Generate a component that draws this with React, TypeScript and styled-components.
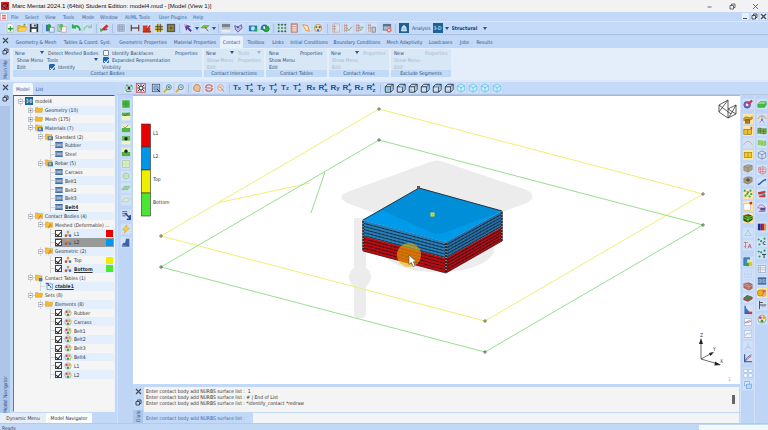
import React from "react";
import styled, { createGlobalStyle, css } from "styled-components";

const uiFont = `"DejaVu Sans Condensed", "Liberation Sans", Arial, sans-serif`;

const Global = createGlobalStyle`
  * { box-sizing: border-box; }
  body { margin: 0; background: #c2d8f7; }
  body, button, input, select, textarea {
    font-family: ${uiFont};
    font-size: 5px;
    line-height: 6px;
    color: #2b3f63;
  }
  button { border: 0; padding: 0; background: none; white-space: nowrap; }
`;

/* ---------- icons ---------- */

const P = (d: string, stroke = "#333", w = 1, fill = "none") => (
  <path d={d} stroke={stroke} strokeWidth={w} fill={fill} />
);
const R = (x: number, y: number, w: number, h: number, fill: string, stroke?: string) => (
  <rect x={x} y={y} width={w} height={h} fill={fill} stroke={stroke} strokeWidth={0.8} />
);
const C = (cx: number, cy: number, r: number, fill: string, stroke?: string) => (
  <circle cx={cx} cy={cy} r={r} fill={fill} stroke={stroke} strokeWidth={0.9} />
);
const cube = (stroke: string, fill: string, face: string) => (
  <>
    {P("M1.500 4.500h6.500v6.500h-6.500z", stroke, 1.1, fill)}
    {P("M1.500 4.500l3-3h6.500v6.500l-3 3M8 4.500l3-3", stroke, 1.1)}
    {P(face, "none", 0, "#7cc9f0")}
  </>
);
const hexCube = (stroke: string, fill: string) => (
  <>
    {P("M6 1l4.500 2.300v5.400l-4.500 2.300-4.500-2.300v-5.400z", stroke, 0.9, fill)}
    {P("M1.500 3.300l4.500 2.400 4.500-2.400M6 5.700v5.300", stroke, 0.9)}
  </>
);
const meshLines = (
  <>
    {R(2, 1, 8, 10, "none", "#c4a59d")}
    {P("M4 2v9M2 4h4M2 7h4", "#b98d86", 0.9)}
  </>
);

const icons: Record<string, React.ReactNode> = {
  list: <>{R(1, 1, 10, 10, "#fff", "#d99")}{P("M3 3.500h6M3 6h6M3 8.500h6", "#d22f3c", 1.3)}</>,
  file: <>{P("M2.500 1h5.500l2 2v8h-7.500z", "#9ab29c", 0.8, "#fff")}{P("M6.500 4v6M3.500 7h6", "#27a030", 1.8)}</>,
  open: <>{P("M1 10v-7h3l1 1h5v2", "#d79a14", 1, "#f6c53e")}{P("M1 10l2-5h9l-2 5z", "#d79a14", 0.6, "#fbd45a")}{P("M8 3l2-2", "#49a543", 1.5)}</>,
  save: <>{R(1, 1, 10, 10, "#30343c")}{R(3, 1, 6, 4, "#d9dde5")}{R(3, 7, 6, 4, "#fff")}{R(6, 2, 2, 2, "#30343c")}</>,
  import: <>{R(1, 2, 6, 8, "#3972b0")}{R(5, 5, 6, 6, "#dfe9f6", "#5e86b4")}{P("M5 9v-6M3 5l2-3 2 3", "#25a52a", 1.6)}</>,
  export: <>{R(1, 2, 6, 8, "#b9d3c0", "#7ba98a")}{R(5, 4, 6, 7, "#f3f3ef", "#b5a391")}{P("M5 9v-6M3 5l2-3 2 3", "#57b55a", 1.4)}</>,
  undo: <>{P("M2 5.500c3-3 8-3 9 3.500M2 1.500v4h4", "#25b144", 2)}</>,
  redo: <>{P("M10 5.500c-3-3-8-3-9 3.500M10 1.500v4h-4", "#8ccba4", 1.6)}</>,
  pen: <>{P("M2 9c3-5 5 2 8-2", "#2f72c5", 1.4)}{P("M4 7l5-5 2 2-5 5z", "#b81c1c", 0.6, "#e32d22")}{P("M1 6l4 3-3 2z", "none", 0, "#4ca94b")}</>,
  grid: <>{P("M2 2h8v8h-8zM4 2v8M6 2v8M8 2v8M2 4h8M2 6h8M2 8h8", "#7d8da8", 0.7)}</>,
  dim: <>{P("M1.500 2v8M10.500 2v8", "#8a3326", 1.4)}{P("M1.500 6h9", "#222", 1.2)}</>,
  angle: <>{P("M1 11v-8h6l-1 3h4v5z", "none", 0, "#d8381f")}{P("M1 10.500h10M5 9l5-6", "#a83219", 1.6)}</>,
  snap: <>{R(2, 2, 8, 8, "#f0c818")}{P("M4.500 1v10M7.500 1v10M1 4.500h10M1 7.500h10", "#333", 1)}</>,
  snap2: <>{R(1, 1, 10, 10, "#4e5968")}{R(3, 3, 6, 6, "#f1ca20")}{P("M5 3v6M7 3v6M3 5h6M3 7h6", "#333", 0.8)}</>,
  pick: <>{P("M2 2l7 2-2.500 1 4 4-1.500 1.500-4-4-1 2.500z", "#3f2a86", 0.5, "#583fb2")}{R(1, 1, 3, 3, "#d9a6d8")}</>,
  plane: <>{P("M1 6l3-3h7l-3 3z", "#3f9c26", 0.6, "#6cc940")}{P("M6 5l4 5", "#b33", 1.1)}</>,
  shade: <>{R(1, 1, 10, 4, "#7c8087")}{R(1, 5, 10, 3, "#b6babf")}{R(1, 8, 10, 3, "#e9ebee")}</>,
  poly: <>{P("M2 3l4 2 4-3 1 4-5 5-3-3z", "#5d55a6", 1, "#b7b4e0")}{C(6, 5, 1, "#4740a0")}</>,
  cam: <>{R(1, 3, 10, 7, "#1f7cc4")}{C(6, 6.5, 2.5, "#bfe5ef")}{R(8, 6, 3, 4, "#28a745")}</>,
  globe: <>{P("M1 8c-1-6 6-8 8-4l-4 5z", "none", 0, "#1878b8")}{C(7.5, 7, 3.5, "#2bab3e", "#147a35")}{R(4, 4, 2, 3, "#fff")}</>,
  dots: <>{[1, 5, 9].map((x) => [1, 5, 9].map((y) => <rect key={`${x}${y}`} x={x} y={y} width="2" height="2" fill={y === 5 ? "#1d8a2e" : "#333"} />))}{P("M2 2h8v8h-8z", "#5cb567", 0.6)}</>,
  calc: <>{R(2.5, 1, 7.5, 10, "#d9a292", "#b2645a")}{P("M4 3h5M4 5.500h5M4 7.500h5M4 9.500h5", "#fff", 0.8)}</>,
  note: <>{P("M2 2l6 1 2 7-4-1z", "#dc8a36", 1, "#fde7c2")}</>,
  palette: <>{C(6, 6, 4.5, "#f1d9b9", "#b7885a")}{C(4, 5, 1.3, "#3aa34a")}{C(8, 5, 1.3, "#c33")}{C(6, 8.5, 1.3, "#36c")}</>,
  tab1: <>{meshLines}{R(6, 4, 4, 4, "#e9e2e0")}</>,
  tab2: <>{P("M2 1v10M4 1v10M1 3h5M1 6h5M1 9h5", "#c08f88", 0.8)}{P("M5 6l2 3 4-5", "#7fae7a", 1.2)}</>,
  tab3: <>{P("M2 1v10M4 1v10M1 3h5M1 6h5M1 9h5", "#c08f88", 0.8)}{P("M5 5h5l-3 4z", "#8aa683", 1)}</>,
  tab4: <>{P("M2 1v10M4 1v10M1 3h4M1 6h4", "#c08f88", 0.8)}{R(6, 5, 4, 6, "#c7c9cc", "#777")}</>,
  close: <>{R(1, 1, 10, 8, "#5d7191")}{R(2, 4, 8, 4, "#a9bad0")}{C(8.5, 8.5, 3, "#e76b5d")}{P("M7 7l3 3M10 7l-3 3", "#fff", 0.9)}</>,
  app: <>{R(0, 0, 12, 12, "#1f5f92")}{P("M3 9.500l1-5h4l1 5z", "#fff", 0.9, "#9fc6e3")}{P("M6 5v-2.500", "#fff", 1.3)}</>,
  eye: <>{P("M2 3l3-1M8 2l2 2M9 10l-5 .5-2-2", "#37a34c", 1.3)}{P("M1 6c3-3 7-3 10 0-3 3-7 3-10 0z", "#487", 0.7, "#eef8ee")}{C(6, 6, 1.8, "#333")}</>,
  fit: <>{R(0.5, 0.5, 11, 11, "#e7d4dc", "#c03945")}{P("M2 2l8 8M10 2l-8 8M6 1.500v9M1.500 6h9", "#222", 1)}{R(4, 4, 4, 4, "#fff", "#333")}</>,
  zoombox: <>{R(1.5, 1.5, 9, 9, "#dfe8f6", "#334")}{P("M3.500 3.500h5v5h-5z", "#3978b8", 0.8, "#8db5df")}{P("M7 7l4 4", "#333", 1.2)}</>,
  zoomin: <>{P("M1 11l4-4", "#e0a626", 2)}{C(7, 5, 3, "#d9efff", "#467")}{P("M5.500 5h3M7 3.500v3", "#174", 0.9)}</>,
  zoomout: <>{P("M1 11l4-4", "#e0a626", 2)}{C(7, 5, 3, "#d9efff", "#467")}{P("M5.500 5h3", "#174", 0.9)}</>,
  hand: <>{P("M2 5l2-3 2 0 2 0 2 3-1 5h-4l-3-2z", "#bd7348", 0.9, "#f0bd90")}</>,
  rotate: <>{P("M2 6c0-5 7-5 8-1M10 6c0 5-7 5-8 1M3 6h6", "#d2644e", 1.4)}</>,
  rotz: <>{C(5.5, 5.5, 3.5, "#f0e2d6", "#d09a82")}{P("M6 6l4 5M3 5h4", "#b88", 1)}</>,
  c1: cube("#28333f", "#bfe2f5", "M3 6h4v4h-4z"),
  c2: cube("#28333f", "none", "M5 3h4v2h-4z"),
  c3: cube("#28333f", "none", "M3 7h2v3h-2z"),
  c4: cube("#28333f", "none", "M8.500 5l2-2v5l-2 2z"),
  c5: cube("#28333f", "none", "M3 4.500l1.500-2h5l-1.500 2z"),
  c6: cube("#28333f", "none", "M3 9h4v1h-4z"),
  iso: hexCube("#5fc0e8", "#c7ecfb"),
  gsel: <>{R(1.5, 1.5, 9, 9, "#40b63c", "#8bb98b")}{P("M1.500 6h9M6 1.500v9", "#2d9a32", 0.8)}</>,
  gtop: <>{R(1, 5, 10, 6, "#f1f3c5")}{R(1, 2, 10, 4, "#58b741")}{P("M3 4l2 2 4-4", "#2b7b2a", 1.1)}</>,
  gbot: <>{R(1, 2, 10, 4, "#eef3c5")}{R(1, 6, 10, 5, "#4fb742")}{P("M3 4l2 2 4-4", "#a78a45", 1.1)}</>,
  geyeb: <>{R(1, 1, 10, 6, "#67bd58")}{R(1, 7, 10, 4, "#f1f3c5")}{C(6, 4.5, 2, "#223")}</>,
  geyet: <>{R(1, 1, 10, 5, "#e4efc0")}{R(1, 6, 10, 5, "#4db440")}{C(6, 5, 2, "#223")}</>,
  gpale: <>{R(2, 2, 8, 8, "#dfefc0", "#a8c59a")}{P("M2 6h8M6 2v8", "#bdd4a0", 0.6)}</>,
  ground: <>{C(6, 6, 3.5, "#e3f4d5", "#83c28f")}{R(4, 4, 4, 4, "#b9dfae")}</>,
  gflat: <>{P("M1 8l3-4h7l-3 4z", "#7fb48a", 0.6, "#9dd18e")}</>,
  gflat2: <>{P("M1 8l3-4h7l-3 4z", "#a9c3a5", 0.6, "#dcedc9")}</>,
  selarrow: <>{P("M1.500 2h6M1.500 4.500h6M1.500 7h4", "#3e5c98", 1.1)}{P("M5 4l6 6M11 6v5h-4", "#26417f", 1.8)}</>,
  bolt: <>{P("M7 1l-5 6h3l-1 4 6-6h-3z", "#c99a1c", 0.6, "#ffd633")}</>,
  stairs: <>{P("M1 10l2-3h2l1-5h4v9z", "none", 0, "#3b62ac")}{P("M1 11h9", "#27427b", 1)}</>,
  matrl: <>{C(5, 7, 4, "#7a6dc0", "#4d4698")}{C(5, 7, 1.5, "#fff")}{P("M6 6l5-4", "#e12c3b", 2.6)}</>,
  block: <>{P("M1 6l3-3h7v4l-2 3h-8z", "#2d7c34", 0.6, "#41bb47")}{P("M1 6l3-3h7l-2 3z", "none", 0, "#86dc7c")}</>,
  pipe: <>{P("M1 5c3-4 7 2 10-2v3c-3 3-7 0-10 2z", "#7a5c14", 0.7, "#e1a72a")}{R(3, 7, 5, 4, "#b4801f", "#64501c")}</>,
  ybox: <>{R(1, 4, 9, 6, "#e9c233", "#947510")}{P("M5.500 4v6", "#947510", 0.7)}{R(9, 1, 2, 3, "#d63a8f")}</>,
  arc: <>{P("M1 8c2-5 8-5 10 0", "#c2ad7b", 1.1)}</>,
  ybox2: <>{R(1.5, 3, 9, 6, "#f4c927", "#a1810f")}{P("M6 3v6", "#a1810f", 0.7)}</>,
  solid: <>{P("M1 4l5-2 5 1v5l-5 3-5-2z", "#77705c", 0.6, "#b0a58a")}{P("M1 4l5 2 5-3M6 6v5", "#77705c", 0.6)}</>,
  solid2: <>{P("M1 4l5-2 5 1v5l-5 3-5-2z", "#6c6656", 0.6, "#a39a80")}{P("M3.500 6h5M6 4v4", "#333", 1.1)}</>,
  nodes: <>{[[2, 2], [6, 4], [9, 2], [3, 8], [8, 9], [10, 6], [5, 6]].map(([x, y]) => <circle key={`${x}-${y}`} cx={x} cy={y} r="1.300" fill="#2b9e4e" />)}{P("M2 2l4 2 3-2M3 8l2-2 3 3", "#6bc48a", 0.6)}</>,
  corner: <>{R(1, 3, 8, 8, "#fff", "#cdb58e")}{R(8, 1, 3, 3, "#d6262b")}</>,
  gcube: <>{P("M1 3l6-1 4 2v4l-5 3-5-2z", "#111", 0.8, "#1f7a26")}{P("M1 3l5 2 5-1M6 5v6M1 6l5 2 5-2", "#b8d12b", 0.8)}</>,
  tri: <>{P("M6 3l4 6h-8z", "#a9bdd8", 0.8)}{C(6, 3, 1, "#9fb4d2")}</>,
  ann: <>{P("M3 2v8M1 3h5M1 8h3", "#b57474", 0.9)}{P("M6 10l2-5 2 5M7 8h2", "#a05555", 0.9)}</>,
  paste: <>{R(1, 1, 7, 9, "#3f8ac0", "#2b5f8a")}{R(5, 3, 5, 6, "#dff0a8")}{R(7, 6, 4, 5, "#e9c21d")}{R(4, 7, 3, 4, "#3aa548")}</>,
  faint: <>{P("M6 2v8M2 6h8M2 2h8v8h-8z", "#bacde8", 0.7)}</>,
  brick: <>{P("M1 3l6-1 4 2v5l-4 2-6-3z", "#7c4a45", 0.6, "#b37068")}{P("M1 5l6 2 4-2M1 3l6 2v5", "#e0b3aa", 0.6)}</>,
  flat: <>{P("M1 6l4-3 6 2v2l-5 3-5-2z", "#7d2e2a", 0.8, "#c7483f")}{P("M1 6l4-3 6 2-5 3z", "none", 0, "#3a8d48")}</>,
  ltri: <>{P("M2.500 1v9h7", "#2857a5", 1.5)}{P("M3 3l6 7h-6z", "none", 0, "#3d69b3")}{R(7, 8, 4, 3, "#d03c3c")}</>,
  plot: <>{R(1.5, 2, 9, 8, "#f4f6fb", "#a6b5cf")}{P("M2 8l3-3 2 2 3-3", "#c55", 0.8)}{P("M2 6l3 1 2-3 3 2", "#57b", 0.7)}</>,
  plot2: <>{R(1.5, 2, 9, 8, "#eef2f9", "#a6b5cf")}{P("M3 8c2-6 5 1 6-4", "#8aa0c0", 0.9)}</>,
  axes: <>{P("M6 2v5l-4 3M6 7l4 2", "#a6c0de", 1)}</>,
  curve: <>{P("M2 1.500v9h9", "#234b93", 1.3)}{P("M2 10c3-1 4-5 8-6", "#c33", 1)}{P("M2 10c2-4 4-6 8-8", "#36a", 1)}</>,
  tiles: <>{R(1, 1.5, 4, 4, "#fff", "#93b5de")}{R(7, 1.5, 4, 4, "#fff", "#93b5de")}{R(1, 7, 4, 4, "#fff", "#93b5de")}{R(7, 7, 4, 4, "#fff", "#93b5de")}</>,
  casc: <>{R(2, 2, 6, 5, "#dcecff", "#6d9fd8")}{R(4, 5, 6, 5, "#b8d8f8", "#6d9fd8")}</>,
  wirearc: <>{P("M1 6c2-5 8-5 10 0", "#d79b3a", 1.2)}{P("M6 3v4l-3 4M6 7l3 4", "#8a7db0", 0.8)}{C(6, 7, 1, "#c33")}</>,
  gmesh: <>{P("M1 3c3-2 6 2 10 0v6c-4 2-7-2-10 0z", "#46702c", 0.7, "#79b84c")}{P("M4 2.500v6.500M8 3.500v6M1 6c3-2 6 2 10 0", "#3c6524", 0.7)}</>,
  gsurf: <>{P("M1 3c3-2 6 2 10 0v6c-4 2-7-2-10 0z", "none", 0, "#8ccb5e")}{P("M4 3v6M8 3v6", "#acdc88", 0.9)}</>,
  wire: hexCube("#7286a3", "none"),
  redmesh: <>{P("M2 3l6-1 3 2-1 6-5 1-3-3z", "#c47b82", 0.8, "#eddde4")}{P("M2 5l8 0M4 3v7M7 2v9M3 8h7", "#c0606c", 0.7)}</>,
  wave: <>{P("M1 9c4 0 4-5 10-6", "#2b5cae", 1.7)}</>,
  redband: <>{P("M1 4l9-2v3l-8 2zM2 8l8-1v3l-7 0z", "none", 0, "#cf3338")}{P("M2 5l8 2", "#3a7c4b", 1)}</>,
  spool: <>{P("M1 6c1-6 8-4 9 0l-5 0z", "#c25fa5", 1)}{R(4, 6, 6, 3, "#5d4a86")}{P("M2 10h8", "#b6407c", 1)}</>,
  contour: <>{R(1, 2, 3, 8, "#1c2c8e")}{R(4, 2, 2, 8, "#4a2f9d")}{R(6, 2, 3, 8, "#c5222b")}{R(9, 2, 2, 8, "#e8a01e")}</>,
  nodesC: <>{C(2, 3, 1.3, "#25a154")}{C(5, 5, 1.3, "#25a154")}{C(3, 9, 1.3, "#25a154")}{C(9, 2, 1.3, "#25a154")}{P("M10 6c-3-2-4 4 0 3", "#234", 1.1)}</>,
  nodesT: <>{C(2, 3, 1.3, "#25a154")}{C(5, 4, 1.3, "#25a154")}{C(3, 9, 1.3, "#25a154")}{C(9, 2, 1.3, "#25a154")}{P("M6 6.500h5M8.500 6v5", "#234", 1.1)}</>,
  table: <>{R(1.5, 2, 9, 8, "#f0f2f5", "#98a2b2")}{P("M1.500 4.500h9M1.500 7h9M4 2v8", "#98a2b2", 0.7)}</>,
  rebar: <>{R(1, 2, 10, 8, "#5f8fc9")}{P("M3 4l6 4M9 4l-6 4", "#e8c2b0", 1)}{P("M1 2.500h10M1 9.500h10M5 6h2", "#345b91", 1.3)}</>,
  ball: <>{P("M6 1l5 1v8l-5 1z", "none", 0, "#efa39c")}{C(4, 6, 3.7, "#e8b51c", "#b07d10")}{R(7, 3, 3, 2, "#d6484d")}</>,
  tsec: <>{P("M3 1v10M3 6h8M3 3h4", "#444", 1.1)}{P("M5 8h5", "#999", 0.8)}</>,
  folder: <>{P("M0.500 2.500h4l1 1h6l-1 6h-10z", "#c78d18", 0.6, "#f5b92c")}</>,
  folder2: <>{P("M0.500 1.500h4l1 1h5v7h-10z", "#c78d18", 0.6, "#f6c136")}{R(4, 5, 8, 6, "#4a78b8")}{R(6, 6, 3, 3, "#e7b64a")}</>,
  folder3: <>{P("M0.500 1.500h4l1 1h6v7h-11z", "#c78d18", 0.6, "#f6be35")}{P("M5 11l3-6 2 3", "#c05a2c", 1)}</>,
  folder4: <>{P("M0.500 1.500h4l1 1h5v7h-10z", "#c78d18", 0.6, "#f6be35")}{R(6, 6, 5, 5, "#3f78b0")}</>,
  mat: <>{R(0.5, 1.5, 11, 9, "#6d99cf")}{P("M0.500 2.500h11M0.500 9.500h11", "#315d97", 1.6)}{P("M3 4.500l6 3M9 4.500l-6 3", "#e3b7a6", 1.2)}</>,
  body: <>{C(6, 3, 2, "#dd9a35")}{C(3, 8.5, 2, "#d14b38")}{C(9, 8.5, 2, "#3e78c4")}{P("M6 5v3", "#687", 1)}</>,
  set: <>{C(6, 6, 4.8, "#f0efdc", "#9d9674")}{C(4, 4.5, 1.7, "#b94ba8")}{C(8, 4.5, 1.7, "#e1a42c")}{C(6, 8.5, 1.8, "#2f9c4d")}</>,
  ctab: <>{R(3, 3, 8, 8, "#e3eefb", "#456fa3")}{P("M1 2h4v4M5 5c3 0 4 2 4 4", "#27568f", 1.4)}</>,
  model: <>{R(0, 0, 12, 12, "#1d6597")}{P("M2 3.500h2.500v5h-2.500M2.500 6h2M6 6h1M8 3.500v5h1c2 0 2-5 0-5z", "#fff", 1)}</>,
  logo: <>{R(0, 0, 12, 12, "#d3202b")}{P("M2 7c0-6 8-6 8-2s-5 1-5 3 4 1 4 1", "#501018", 1.8)}{P("M3 4l5 5", "#f7a0a0", 1)}</>,
};

const Svg = styled.svg<{ $s: number }>`
  display: block;
  flex: none;
  width: ${(p) => p.$s}px;
  height: ${(p) => p.$s}px;
`;
const Icon = ({ name, size = 10 }: { name: string; size?: number }) => (
  <Svg $s={size} viewBox="0 0 12 12" aria-hidden>{icons[name]}</Svg>
);

/* ---------- window chrome ---------- */

const Page = styled.div`
  display: flex;
  flex-direction: column;
  min-height: 100vh;
  background: #c2d8f7;
`;
const TitleBar = styled.header`
  display: flex;
  align-items: center;
  gap: 3px;
  height: 12px;
  padding: 0 9px 0 1px;
  background: #f2f2f2;
`;
const Title = styled.h1`
  flex: 1;
  margin: 0;
  font: 400 6px/8px "Liberation Sans", Arial, sans-serif;
  color: #111;
  white-space: nowrap;
`;
const WinButtons = styled.div<{ $gap: number }>`
  display: flex;
  align-items: center;
  gap: ${(p) => p.$gap}px;
`;
const WinButton = styled.button<{ $pale?: boolean }>`
  display: grid;
  place-items: center;
  width: 7px;
  height: 7px;
  background: ${(p) => (p.$pale ? "#e9f0fa" : "none")};
`;
const winPaths = {
  min: "M1.500 4h4",
  minLow: "M1 5.500h4",
  max: "M1 2.500h3.500v3.500h-3.500zM2.500 2.500v-1.500h3.500v3.500h-1.500",
  x: "M1 1l5 5M6 1l-5 5",
};
const WinGlyph = ({ kind, w = 1 }: { kind: keyof typeof winPaths; w?: number }) => (
  <Svg $s={7} viewBox="0 0 7 7" aria-hidden>{P(winPaths[kind], "#444b58", w)}</Svg>
);

const MenuBar = styled.nav`
  display: flex;
  align-items: center;
  height: 10px;
  padding-right: 1px;
  border-bottom: 1px solid #d9e6fa;
`;
const MenuItem = styled.button<{ $w: number }>`
  width: ${(p) => p.$w}px;
  text-align: left;
  color: #3c5d92;
`;
const Grow = styled.div`
  flex: 1;
`;

const ToolBar = styled.div<{ $start: number; $line?: boolean }>`
  display: flex;
  align-items: center;
  height: 13px;
  padding-left: ${(p) => p.$start}px;
  border-bottom: 1px solid ${(p) => (p.$line ? "#abc1df" : "#b4c8e6")};
  background: #c5daf8;
`;
const ToolColumn = styled.div<{ $w: number }>`
  display: flex;
  flex-direction: column;
  align-items: center;
  width: ${(p) => p.$w}px;
  padding-top: 3px;
  border-left: 1px solid #d4e3f9;
  background: #bfd5f6;
`;
const ToolButton = styled.button<{ $on?: boolean }>`
  display: grid;
  place-items: center;
  flex: none;
  width: 12px;
  height: 12px;
  border: 1px solid #c4d9f7;
  background: ${(p) => (p.$on ? "#ffe7a3" : "#d0e1f8")};
`;
const DropButton = styled.button`
  display: grid;
  place-items: center;
  flex: none;
  width: 5px;
  height: 10px;
`;
const Arrow = styled.span<{ $dim?: boolean }>`
  display: inline-block;
  flex: none;
  border: 2px solid transparent;
  border-bottom: 0;
  border-top: 3px solid ${(p) => (p.$dim ? "#a4b3c8" : "#2c4f8c")};
`;
const Sep = styled.span<{ $w: number }>`
  display: grid;
  place-items: center;
  flex: none;
  width: ${(p) => p.$w}px;
  height: 10px;
  &::after {
    content: "";
    width: 1px;
    height: 9px;
    background: ${(p) => (p.$w > 3 ? "#a9c1e3" : "transparent")};
  }
`;
const Gap = styled.span<{ $h: number }>`
  flex: none;
  height: ${(p) => p.$h}px;
`;
const ToolText = styled.span`
  font-size: 5px;
  color: #33517f;
`;
const TypeSelect = styled.select`
  appearance: none;
  width: 31px;
  margin-left: 2px;
  padding: 0;
  border: 0;
  background: none;
  font-weight: 700;
  color: #12366f;
`;
const Badge = styled.button`
  width: 10px;
  height: 10px;
  margin-left: 2px;
  background: #1b6398;
  color: #fff;
`;

const renderTools = (spec: string) =>
  spec.split(" ").map((t, i) => {
    if (t[0] === "_") return <Sep key={i} $w={Number(t.slice(1))} />;
    if (t === "v") return <DropButton key={i} aria-label="More options"><Arrow /></DropButton>;
    return <ToolButton key={i} aria-label={t}><Icon name={t} /></ToolButton>;
  });
const renderColumn = (spec: string) =>
  spec.split(" ").map((t, i) => {
    if (t[0] === "_") return <Gap key={i} $h={Number(t.slice(1))} />;
    const on = t.endsWith("*");
    const name = t.replace("*", "");
    return <ToolButton key={i} $on={on} aria-label={name}><Icon name={name} /></ToolButton>;
  });

/* ---------- ribbon ---------- */

const RibbonDock = styled.section`
  display: flex;
  height: 47px;
  border-bottom: 2px solid #dce8fa;
`;
const Rail = styled.div`
  display: flex;
  flex-direction: column;
  align-items: center;
  gap: 4px;
  flex: none;
  width: 10px;
  padding-top: 2px;
`;
const RailTab = styled.button<{ $end?: boolean }>`
  flex: 1;
  width: 10px;
  min-height: 0;
  writing-mode: vertical-rl;
  transform: rotate(180deg);
  text-align: ${(p) => (p.$end ? "left" : "center")};
  background: #adc5e8;
  color: #2f568f;
`;
const RibbonMain = styled.div`
  flex: 1;
  min-width: 0;
  display: flex;
  flex-direction: column;
  padding-left: 3px;
`;
const TabRow = styled.div`
  display: flex;
  align-items: flex-end;
  height: 13px;
`;
const Tab = styled.button<{ $w: number; $on?: boolean }>`
  width: ${(p) => p.$w}px;
  height: 12px;
  color: #33558c;
  ${(p) => p.$on && css`background: #e7f0fd; border-radius: 2px 2px 0 0;`}
`;
const RibbonBody = styled.div`
  flex: 1;
  display: flex;
  align-items: flex-start;
  gap: 2px;
  padding-top: 1px;
  margin-left: -3px;
  padding-left: 3px;
  background: #e4eefb;
`;
const Group = styled.section<{ $w: number }>`
  width: ${(p) => p.$w}px;
  background: #d7e7f5;
`;
const GroupGrid = styled.div<{ $cols: string }>`
  display: grid;
  grid-template-columns: ${(p) => p.$cols};
  grid-template-rows: repeat(3, 1fr);
  align-items: center;
  height: 21px;
  padding: 0 2px;
`;
const GroupTitle = styled.h2`
  margin: 0;
  font: 400 5px/7px ${uiFont};
  text-align: center;
  color: #2d5080;
  background: #c3daf7;
`;
const Cell = styled.div<{ $in?: number }>`
  display: flex;
  align-items: center;
  justify-content: space-between;
  padding-left: ${(p) => p.$in ?? 0}px;
  padding-right: 3px;
  white-space: nowrap;
`;
const Cmd = styled.button<{ $dim?: boolean }>`
  color: ${(p) => (p.$dim ? "#a9b8ca" : "#2d4d7c")};
`;
const Check = styled.label`
  display: flex;
  align-items: center;
  gap: 3px;
  white-space: nowrap;
  color: #2d4d7c;
`;
const Box = styled.input<{ $plain?: boolean }>`
  appearance: none;
  display: grid;
  place-items: center;
  flex: none;
  width: ${(p) => (p.$plain ? 7 : 6)}px;
  height: ${(p) => (p.$plain ? 7 : 6)}px;
  margin: 0;
  border: 1px solid ${(p) => (p.$plain ? "#444" : "#7b8798")};
  border-radius: ${(p) => (p.$plain ? 0 : 1)}px;
  background: #fff;
  &:checked { ${(p) => !p.$plain && "background: #1c64b4; border-color: #1c64b4;"} }
  &:checked::after {
    content: "";
    width: 2px;
    height: 4px;
    border: solid ${(p) => (p.$plain ? "#222" : "#fff")};
    border-width: 0 1px 1px 0;
    transform: rotate(40deg);
  }
`;

const SmallGroup = ({ title, w, dim, arrow, second, indent }: {
  title: string; w: number; dim?: boolean; arrow?: boolean; second: "tools" | "props" | "propsDim"; indent: number;
}) => (
  <Group $w={w}>
    <GroupGrid $cols="31px 1fr">
      <Cell $in={indent ? 1 : 0}><Cmd>New</Cmd>{arrow && <Arrow />}</Cell>
      <Cell $in={1}>
        {second === "tools" ? <><Cmd $dim>Tools</Cmd><Arrow $dim /></> : <Cmd $dim={second === "propsDim"}>Properties</Cmd>}
      </Cell>
      <Cell $in={1}><Cmd $dim={dim}>Show Menu</Cmd></Cell>
      <Cell $in={1}>{second === "tools" && <Cmd $dim>Properties</Cmd>}</Cell>
      <Cell $in={1}><Cmd $dim={dim}>Edit</Cmd></Cell>
    </GroupGrid>
    <GroupTitle>{title}</GroupTitle>
  </Group>
);

/* ---------- navigator ---------- */

const Main = styled.main`
  flex: 1;
  display: flex;
  min-height: 0;
`;
const Navigator = styled.aside`
  display: flex;
  flex-direction: column;
  flex: none;
  width: 117px;
`;
const NavTop = styled.div`
  flex: 1;
  display: flex;
  min-height: 0;
`;
const NavPanel = styled.div`
  flex: 1;
  display: flex;
  flex-direction: column;
  padding: 0 2px 1px 3px;
`;
const NavTab = styled.button<{ $on?: boolean }>`
  height: 12px;
  padding: 0 3px;
  border-radius: 2px 2px 0 0;
  background: ${(p) => (p.$on ? "#f3f7fd" : "none")};
  color: #2c5795;
`;
const TreeBox = styled.div`
  flex: 1;
  padding-top: 1px;
  border: 1px solid #eef3fa;
  border-top-color: #4c5560;
  border-left-color: #6d7783;
  background: #f5f5f5;
`;
const Tree = styled.ul`
  display: grid;
  grid-auto-rows: 1fr;
  height: 282px;
  margin: 0;
  padding: 0;
  list-style: none;
`;
const TreeRow = styled.li<{ $level: number }>`
  display: flex;
  align-items: stretch;
  min-height: 0;
  padding-left: ${(p) => p.$level * 10 + 1}px;
`;
const Branch = styled.span`
  display: grid;
  place-items: center;
  flex: none;
  width: 10px;
`;
const TreeItem = styled.div<{ $alt: boolean; $sel?: boolean }>`
  flex: 1;
  display: flex;
  align-items: center;
  gap: 2px;
  min-width: 0;
  white-space: nowrap;
  color: #333;
  background: ${(p) => (p.$sel ? "#999" : p.$alt ? "#e3effc" : "transparent")};
`;
const TreeLabel = styled.label<{ $bold?: boolean }>`
  flex: 1;
  ${(p) => p.$bold && css`font-weight: 700; text-decoration: underline;`}
`;
const Swatch = styled.span<{ $c: string }>`
  flex: none;
  width: 7px;
  height: 7px;
  margin-right: 1px;
  background: ${(p) => p.$c};
`;
const BottomTabs = styled.div`
  display: flex;
  height: 10px;
`;
const BottomTab = styled.button<{ $on?: boolean }>`
  width: 46px;
  background: ${(p) => (p.$on ? "#fbfcfe" : "#e6eefa")};
  color: #333;
`;

type Node = { l: number; t: string; i: string; open?: boolean; check?: boolean; bold?: boolean; sel?: boolean; c?: string };
const nodes: Node[] = [
  { l: 0, t: "model4", i: "model", open: true },
  { l: 1, t: "Geometry (10)", i: "folder", open: false },
  { l: 1, t: "Mesh (175)", i: "folder", open: false },
  { l: 1, t: "Materials (7)", i: "folder2", open: true },
  { l: 2, t: "Standard (2)", i: "folder2", open: true },
  { l: 3, t: "Rubber", i: "mat" },
  { l: 3, t: "Steel", i: "mat" },
  { l: 2, t: "Rebar (5)", i: "folder2", open: true },
  { l: 3, t: "Carcass", i: "mat" },
  { l: 3, t: "Belt1", i: "mat" },
  { l: 3, t: "Belt2", i: "mat" },
  { l: 3, t: "Belt3", i: "mat" },
  { l: 3, t: "Belt4", i: "mat", bold: true },
  { l: 1, t: "Contact Bodies (4)", i: "folder3", open: true },
  { l: 2, t: "Meshed (Deformable) ...", i: "folder3", open: true },
  { l: 3, t: "L1", i: "body", check: true, c: "#e80000" },
  { l: 3, t: "L2", i: "body", check: true, c: "#0098ea", sel: true },
  { l: 2, t: "Geometric (2)", i: "folder3", open: true },
  { l: 3, t: "Top", i: "body", check: true, c: "#eeee00" },
  { l: 3, t: "Bottom", i: "body", check: true, c: "#48e834", bold: true },
  { l: 1, t: "Contact Tables (1)", i: "folder4", open: true },
  { l: 2, t: "ctable1", i: "ctab", bold: true },
  { l: 1, t: "Sets (8)", i: "folder", open: true },
  { l: 2, t: "Elements (8)", i: "folder", open: true },
  ...["Rubber", "Carcass", "Belt1", "Belt2", "Belt3", "Belt4", "L1", "L2"].map((t) => ({ l: 3, t, i: "set", check: true })),
];

const BranchMark = ({ open }: { open?: boolean }) => (
  <Svg $s={9} viewBox="0 0 9 9" aria-hidden>
    {open === undefined ? P("M4.500 0v9M4.500 4.500h4.500", "#c3c8d0", 0.7) : (
      <>
        {P("M6.500 4.500h2.500M4.500 0v2M4.500 7v2", "#c3c8d0", 0.7)}
        {R(2.5, 2.5, 4, 4, "#f8f8f8", "#b4b9c1")}
        {P(open ? "M3.500 4.500h2" : "M3.500 4.500h2M4.500 3.500v2", "#666", 0.8)}
      </>
    )}
  </Svg>
);

/* ---------- view area ---------- */

const Work = styled.div`
  flex: 1;
  display: flex;
  flex-direction: column;
  min-width: 0;
`;
const AxisButton = styled.button`
  display: flex;
  align-items: center;
  justify-content: center;
  flex: none;
  width: 12px;
  height: 12px;
  font: 700 8px/10px "Liberation Sans", Arial, sans-serif;
  color: #235091;
`;
const AxisName = styled.span`
  align-self: flex-end;
  font: 700 6px/8px "Liberation Sans", Arial, sans-serif;
`;
const AxisSuffix = styled.span`
  display: flex;
  flex-direction: column;
  align-items: center;
`;
const WorkRow = styled.div`
  flex: 1;
  display: flex;
  min-height: 0;
`;
const Center = styled.div`
  flex: 1;
  display: flex;
  flex-direction: column;
  min-width: 0;
`;
const Viewport = styled.div`
  flex: 1;
  display: flex;
  min-height: 0;
  border-top: 1px solid #a9b8cc;
  background: #fff;
`;
const Scene = styled.svg`
  display: block;
  width: 100%;
  font-family: ${uiFont};
  font-size: 5px;
`;
const Dialog = styled.section`
  display: flex;
  height: 39px;
  padding-top: 2px;
`;
const DialogMain = styled.div`
  flex: 1;
  display: flex;
  flex-direction: column;
  gap: 1px;
  padding: 1px 1px 0 1px;
`;
const Log = styled.div`
  flex: 1;
  display: flex;
  justify-content: space-between;
  align-items: center;
  padding-right: 4px;
  background: #f4f4f4;
  color: #333;
`;
const LogLines = styled.pre`
  align-self: flex-start;
  margin: 0;
  padding: 1px 2px;
  font: 400 5px/6px ${uiFont};
`;
const Thumb = styled.span`
  width: 3px;
  height: 9px;
  background: #666;
`;
const Prompt = styled.div`
  display: flex;
  align-items: center;
  height: 10px;
`;
const PromptLabel = styled.label`
  width: 109px;
  padding-left: 2px;
  color: #3d69a8;
`;
const PromptInput = styled.input`
  flex: 1;
  height: 10px;
  border: 0;
  padding: 0 2px;
  background: #f3f4f6;
`;
const Status = styled.footer`
  display: flex;
  align-items: center;
  justify-content: space-between;
  height: 8px;
  padding-left: 2px;
  border-top: 1px solid #b5cae8;
  color: #3a4a66;
`;
const StatusField = styled.span`
  width: 9%;
  height: 6px;
  background: #f4f7fc;
`;

const lerp = (a: number[], b: number[], t: number) => `${a[0] + (b[0] - a[0]) * t} ${a[1] + (b[1] - a[1]) * t}`;
const layers = Array.from({ length: 9 }, (_, i) => {
  const t = (i + 1) / 10;
  return `M${lerp([363, 219], [363, 250], t)}L${lerp([446, 241], [446, 272], t)}L${lerp([502, 210], [502, 240], t)}`;
}).join("");
const corners = [[379, 108], [703, 193], [485, 320], [161, 235], [379, 139], [703, 224], [485, 351], [161, 266]];
const legend = [["L1", "#e60000"], ["L2", "#0095e5"], ["Top", "#eeee00"], ["Bottom", "#4be634"]];

const Model = () => (
  <Scene viewBox="133 95 607 288" role="img" aria-label="Model view">
    <g fill="#ececec">
      <path d="M347 191L430 161q7-3 14 0L527 189q11 6 0 13L444 232q-7 3-14 0L347 202q-11-6 0-11z" />
      <path d="M382 215h112v36c-12 27-100 27-112 0z" />
      <path d="M354 217h12v98q-6 5-12 0z" />
      <circle cx="360" cy="276" r="11" />
    </g>
    <path d="M379 108L703 193 485 320 161 235zM217 202L310 182" fill="none" stroke="#f1ee73" strokeWidth="1" />
    <path d="M379 139L703 224 485 351 161 266zM325 171L311 212" fill="none" stroke="#95df8d" strokeWidth="1" />
    {corners.map(([x, y]) => <path key={`${x}${y}`} d={`M${x - 2} ${y}h4M${x} ${y - 2}v4`} stroke="#555" strokeWidth="0.8" />)}
    <path d="M363 219L446 241 446 257 363 235z" fill="#257fba" />
    <path d="M446 241L502 210 502 226 446 257z" fill="#236fa6" />
    <path d="M363 235L446 257 446 272 363 250z" fill="#c40a0e" />
    <path d="M446 257L502 226 502 240 446 272z" fill="#b00c11" />
    <path d={layers} fill="none" stroke="#1c2028" strokeWidth="0.7" />
    <path d={layers} fill="none" stroke="#000" strokeWidth="1" strokeDasharray="2 2" opacity="0.350" />
    <path d="M363 219L419 187 502 210 446 241z" fill="#008ed9" />
    <path d="M363 219L382 209 432 232q7 2 14-1L495 213 446 241z" fill="#009aea" />
    <path d="M363 219L419 187 502 210" fill="none" stroke="#234" strokeWidth="1" />
    <path d="M363 219v31M446 241v31M502 210v30" stroke="#222" strokeWidth="1.500" />
    <path d="M363 219v31M446 241v31M502 210v30" stroke="#999" strokeWidth="1.500" strokeDasharray="1 2" />
    <path d="M363 250L446 272 502 240" fill="none" stroke="#311" strokeWidth="0.800" />
    <rect x="417" y="185" width="3" height="3" fill="#555" />
    <rect x="431" y="212" width="3" height="3" fill="#9fc13b" stroke="#e4e32c" strokeWidth="1" />
    <circle cx="409" cy="254" r="12" fill="#f2b200" opacity="0.600" />
    <path d="M409 254v9.500l2.300-2 1.800 4 2-1-1.700-3.700h3z" fill="#fff" stroke="#444" strokeWidth="0.600" />
    {legend.map(([name, color], i) => (
      <g key={name}>
        <rect x="141.500" y={123 + i * 23} width="9" height="23" fill={color} stroke="#333" strokeWidth="0.600" />
        <text x="153" y={134 + i * 23} fill="#333">{name}</text>
      </g>
    ))}
    <path d="M719 104L728 99V117L719 111zM719 111L728 99M719 104L731 113 736 104V113L728 117 731 113M728 108L736 104M728 108L736 113" fill="none" stroke="#333" strokeWidth="0.800" />
    <path d="M701 358v-17M701 358l11-6M701 358l17 5" stroke="#444" strokeWidth="0.800" />
    <path d="M701 337l-2 6h4zM714 351l-5 1 1.500 3zM721 364l-6-3.500-.5 4z" fill="#222" />
    <g fill="#333"><text x="700" y="336">Z</text><text x="713" y="350">Y</text><text x="720" y="362">X</text></g>
    <text x="728" y="380" fill="#9fb0c8">1</text>
  </Scene>
);

const DockButtons = () => (
  <>
    <WinButton aria-label="Close panel"><WinGlyph kind="x" w={1.2} /></WinButton>
    <WinButton aria-label="Float panel"><WinGlyph kind="max" /></WinButton>
  </>
);

const menus: [string, number][] = [["File", 14], ["Select", 20], ["View", 18], ["Tools", 19], ["Mode", 18], ["Window", 25], ["AI/ML Tools", 34], ["User Plugins", 34], ["Help", 14]];
const tabs: [string, number][] = [["Geometry & Mesh", 46], ["Tables & Coord. Syst.", 57], ["Geometric Properties", 54], ["Material Properties", 50], ["Contact", 23], ["Toolbox", 26], ["Links", 18], ["Initial Conditions", 44], ["Boundary Conditions", 52], ["Mesh Adaptivity", 43], ["Loadcases", 29], ["Jobs", 19], ["Results", 21]];

export default function App() {
  return (
    <Page>
      <Global />
      <TitleBar>
        <Icon name="logo" size={8} />
        <Title>Marc Mentat 2024.1 (64bit) Student Edition: model4.mud - [Model (View 1)]</Title>
        <WinButtons $gap={16}>
          <WinButton aria-label="Minimize"><WinGlyph kind="min" w={0.8} /></WinButton>
          <WinButton aria-label="Restore"><WinGlyph kind="max" w={0.8} /></WinButton>
          <WinButton aria-label="Close"><WinGlyph kind="x" w={0.8} /></WinButton>
        </WinButtons>
      </TitleBar>
      <MenuBar>
        <Icon name="list" size={8} />
        <Sep $w={3} />
        {menus.map(([t, w]) => <MenuItem key={t} $w={w}>{t}</MenuItem>)}
        <Grow />
        <WinButtons $gap={2}>
          <WinButton $pale aria-label="Minimize view"><WinGlyph kind="minLow" /></WinButton>
          <WinButton $pale aria-label="Restore view"><WinGlyph kind="max" /></WinButton>
          <WinButton $pale aria-label="Close view"><WinGlyph kind="x" w={1.4} /></WinButton>
        </WinButtons>
      </MenuBar>
      <ToolBar $start={4} $line>
        {renderTools("file open save _4 import export _2 undo redo _4 pen _5 grid _2 dim angle snap snap2 _5 pick v plane v _4 shade poly _3 cam globe _5 dots calc note palette _6 tab1 tab2 tab3 tab4 _3 close _5 app _2")}
        <ToolText>Analysis</ToolText>
        <Badge>3-D</Badge>
        <Sep $w={2} />
        <DropButton aria-label="Dimension"><Arrow /></DropButton>
        <TypeSelect aria-label="Analysis type" defaultValue="Structural"><option>Structural</option></TypeSelect>
        <Arrow />
      </ToolBar>
      <RibbonDock>
        <Rail>
          <DockButtons />
          <RailTab>Main Me</RailTab>
        </Rail>
        <RibbonMain>
          <TabRow role="tablist">
            {tabs.map(([t, w]) => <Tab key={t} role="tab" aria-selected={t === "Contact"} $on={t === "Contact"} $w={w}>{t}</Tab>)}
          </TabRow>
          <RibbonBody>
            <Group $w={189}>
              <GroupGrid $cols="32px 54px 74px 1fr">
                <Cell><Cmd>New</Cmd><Arrow /></Cell>
                <Cell $in={1}><Cmd>Detect Meshed Bodies</Cmd></Cell>
                <Cell $in={2}><Check><Box type="checkbox" />Identify Backfaces</Check></Cell>
                <Cell><Cmd>Properties</Cmd></Cell>
                <Cell $in={2}><Cmd>Show Menu</Cmd></Cell>
                <Cell><Cmd>Tools</Cmd><Arrow /></Cell>
                <Cell $in={2}><Check><Box type="checkbox" defaultChecked />Expanded Representation</Check></Cell>
                <Cell />
                <Cell $in={2}><Cmd>Edit</Cmd></Cell>
                <Cell $in={2}><Check><Box type="checkbox" defaultChecked />Identify</Check></Cell>
                <Cell $in={1}><Cmd>Visibility</Cmd></Cell>
              </GroupGrid>
              <GroupTitle>Contact Bodies</GroupTitle>
            </Group>
            <SmallGroup title="Contact Interactions" w={60} dim arrow second="tools" indent={0} />
            <SmallGroup title="Contact Tables" w={61} second="props" indent={1} />
            <SmallGroup title="Contact Areas" w={60} dim arrow second="propsDim" indent={0} />
            <SmallGroup title="Exclude Segments" w={60} dim second="propsDim" indent={1} />
          </RibbonBody>
        </RibbonMain>
      </RibbonDock>
      <Main>
        <Navigator>
          <NavTop>
            <Rail>
              <DockButtons />
              <RailTab $end>Model Navigator</RailTab>
            </Rail>
            <NavPanel>
              <TabRow role="tablist">
                <NavTab role="tab" aria-selected $on>Model</NavTab>
                <NavTab role="tab" aria-selected={false}>List</NavTab>
              </TabRow>
              <TreeBox>
                <Tree>
                  {nodes.map((n, i) => (
                    <TreeRow key={i} $level={n.l}>
                      <Branch><BranchMark open={n.open} /></Branch>
                      <TreeItem $alt={i % 2 === 1} $sel={n.sel}>
                        {n.check && <Box $plain type="checkbox" defaultChecked id={`node${i}`} />}
                        <Icon name={n.i} size={8} />
                        <TreeLabel htmlFor={n.check ? `node${i}` : undefined} $bold={n.bold}>{n.t}</TreeLabel>
                        {n.c && <Swatch $c={n.c} />}
                      </TreeItem>
                    </TreeRow>
                  ))}
                </Tree>
              </TreeBox>
            </NavPanel>
          </NavTop>
          <BottomTabs>
            <BottomTab>Dynamic Menu</BottomTab>
            <BottomTab $on>Model Navigator</BottomTab>
          </BottomTabs>
        </Navigator>
        <Work>
          <ToolBar $start={6}>
            {renderTools("eye fit _3 zoombox zoomin zoomout _5 hand rotate rotz _4")}
            {["T", "R"].map((k) => (
              <React.Fragment key={k}>
                {["x", "x", "y", "y", "z", "z"].map((a, i) => (
                  <AxisButton key={i} aria-label={`${k === "T" ? "Translate" : "Rotate"} ${a}${i % 2 ? " plus" : " minus"}`}>
                    {k}
                    <AxisSuffix>
                      {i % 2 === 1 && (
                        <Svg $s={3} viewBox="0 0 3 3" aria-hidden><path d="M1.500 0L3 2.500H0z" fill="#235091" /></Svg>
                      )}
                      <AxisName>{a}</AxisName>
                    </AxisSuffix>
                  </AxisButton>
                ))}
                <Sep $w={k === "T" ? 2 : 6} />
              </React.Fragment>
            ))}
            {renderTools("c1 c2 c3 c4 c5 c6 iso iso iso iso")}
          </ToolBar>
          <WorkRow>
            <ToolColumn $w={16}>
              {renderColumn("gsel gtop gbot geyeb geyet gpale ground gflat gflat2 _3 selarrow _2 bolt _1 stairs")}
            </ToolColumn>
            <Center>
              <Viewport><Model /></Viewport>
              <Dialog>
                <Rail>
                  <DockButtons />
                  <RailTab>Dialo</RailTab>
                </Rail>
                <DialogMain>
                  <Log>
                    <LogLines>{"Enter contact body add NURBS surface list :  1\nEnter contact body add NURBS surface list : # | End of List\nEnter contact body add NURBS surface list : *identify_contact *redraw"}</LogLines>
                    <Thumb />
                  </Log>
                  <Prompt>
                    <PromptLabel htmlFor="command">Enter contact body add NURBS surface list :</PromptLabel>
                    <PromptInput id="command" />
                  </Prompt>
                </DialogMain>
              </Dialog>
            </Center>
            <ToolColumn $w={14}>
              {renderColumn("matrl _3 pipe* ybox* arc ybox2* _1 solid solid2 _2 nodes* corner* gcube* _3 tri ann _5 paste faint brick flat ltri plot plot2 axes curve _3 tiles casc")}
            </ToolColumn>
            <ToolColumn $w={14}>
              {renderColumn("block _3 wirearc gmesh gsurf wire _3 redmesh wave redband _2 spool _7 contour _3 nodesC nodesT _3 table rebar ball* tsec _2 set")}
            </ToolColumn>
          </WorkRow>
        </Work>
      </Main>
      <Status>
        <span>Ready</span>
        <StatusField />
      </Status>
    </Page>
  );
}
